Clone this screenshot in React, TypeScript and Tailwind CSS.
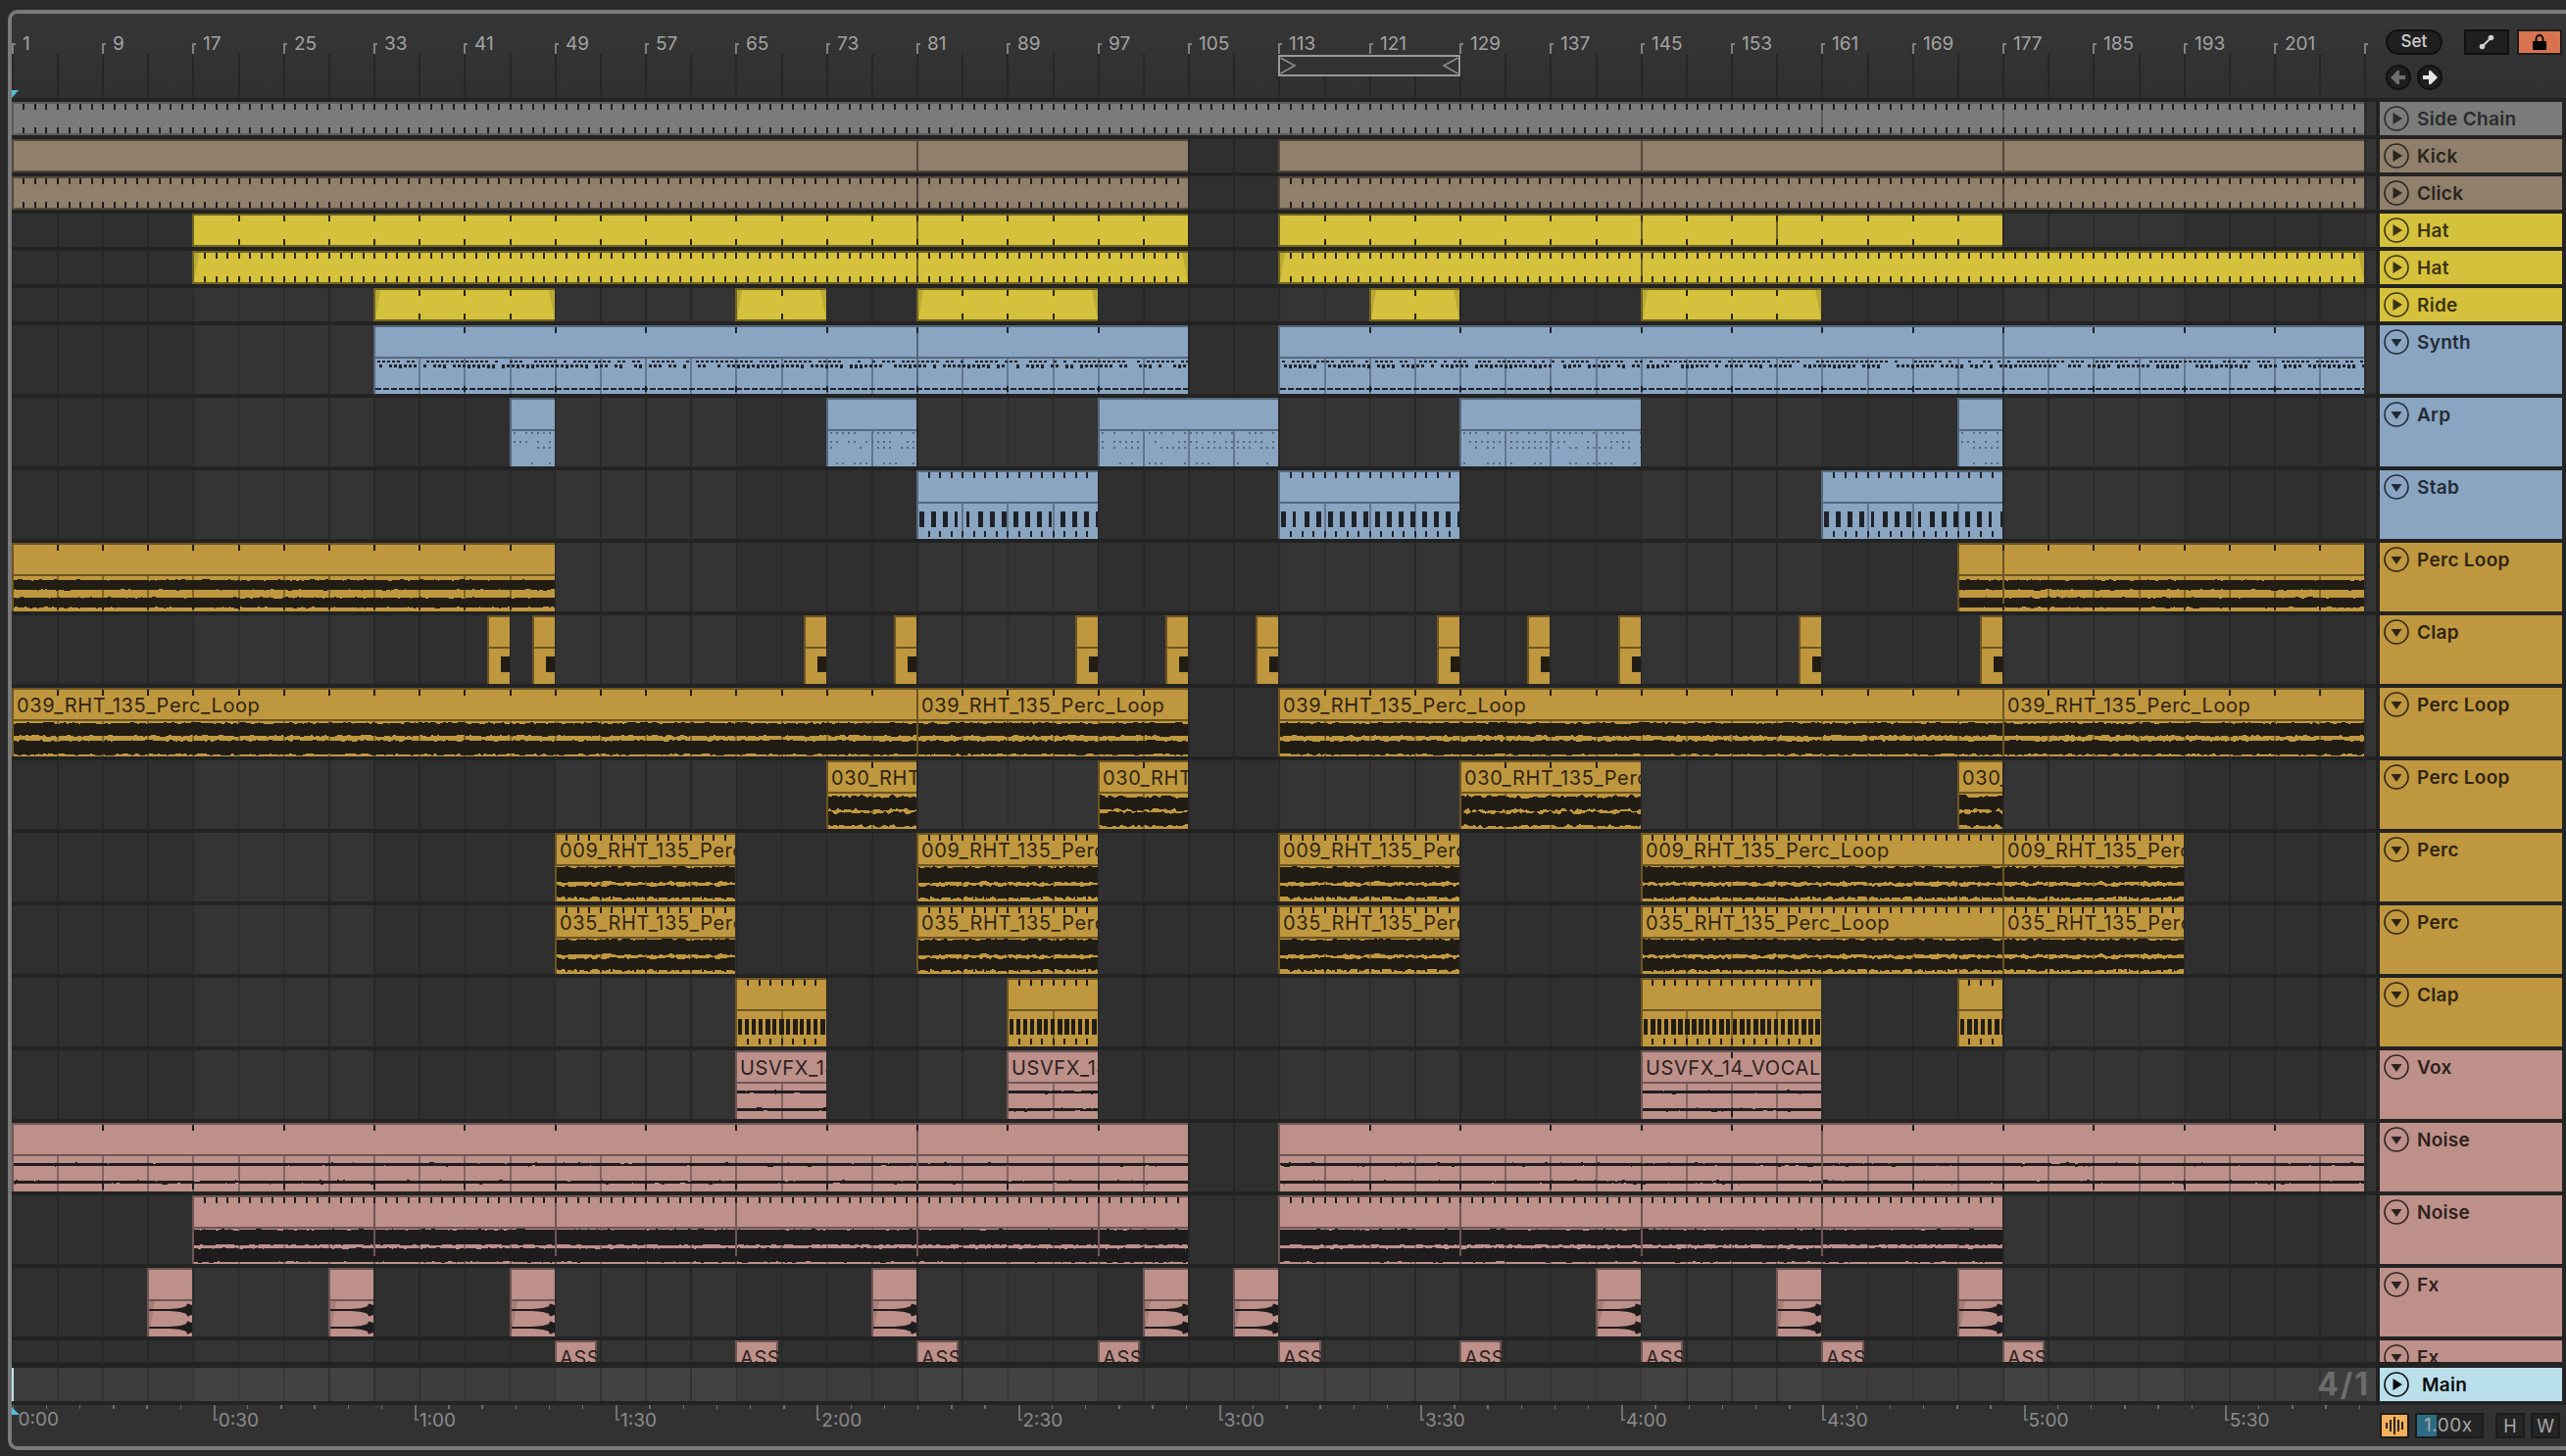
import type { ReactNode } from 'react';

const BAR = 11.5415;
const bx = (bar: number) => Math.round((bar - 1) * BAR - 0.2);

type Tone = 'gray' | 'tan' | 'yellow' | 'blue' | 'gold' | 'pink';

const TONES: Record<Tone, { clip: string; header: string; edge: string; ink: string; icon: string; label: string }> = {
    gray: { clip: 'bg-[#7b7b7b]', header: 'bg-[#7b7b7b] text-[#2b2b2b]', edge: '#5c5c5c', ink: '#211c1e', icon: '#2b2b2b', label: 'text-[#2b2b2b]' },
    tan: { clip: 'bg-[#8f7f6b]', header: 'bg-[#8f7f6b] text-[#2a241e]', edge: '#54483b', ink: '#211c18', icon: '#2a241e', label: 'text-[#2a241e]' },
    yellow: { clip: 'bg-[#d5c13c]', header: 'bg-[#d5c13c] text-[#3a3410]', edge: '#6f6420', ink: '#2a2610', icon: '#3a3410', label: 'text-[#3a3410]' },
    blue: { clip: 'bg-[#8aa5c2]', header: 'bg-[#8aa5c2] text-[#222b36]', edge: '#56687c', ink: '#1e2228', icon: '#222b36', label: 'text-[#222b36]' },
    gold: { clip: 'bg-[#bf973e]', header: 'bg-[#bf973e] text-[#2f2510]', edge: '#6d5522', ink: '#211d14', icon: '#2f2510', label: 'text-[#2f2510]' },
    pink: { clip: 'bg-[#bd908a]', header: 'bg-[#bd908a] text-[#2e2220]', edge: '#705654', ink: '#1f1c1e', icon: '#2e2220', label: 'text-[#2e2220]' },
};

type Wave = 'none' | 'dots' | 'arp' | 'stab' | 'thick' | 'loop' | 'perc' | 'spindle' | 'short' | 'blocks' | 'lines' | 'heavy' | 'swell';

type ClipDef = { from: number; to: number; label?: string; marks?: number[] };

type RowDef = {
    name: string;
    tone: Tone;
    height: 34 | 70 | 22;
    wave: Wave;
    tick?: number;
    tickBottom?: boolean;
    fade?: boolean;
    clips: ClipDef[];
};

const split = (from: number, to: number, marks: number[] = [], label?: string): ClipDef => ({ from, to, marks, label });

const ROWS: RowDef[] = [
    { name: 'Side Chain', tone: 'gray', height: 34, wave: 'none', tick: 1, tickBottom: true, clips: [split(1, 209, [161, 177])] },
    { name: 'Kick', tone: 'tan', height: 34, wave: 'none', clips: [split(1, 105, [81]), split(113, 209, [145, 177])] },
    { name: 'Click', tone: 'tan', height: 34, wave: 'none', tick: 1, tickBottom: true, clips: [split(1, 105, [81]), split(113, 209, [145, 177])] },
    { name: 'Hat', tone: 'yellow', height: 34, wave: 'none', tick: 4, tickBottom: true, clips: [split(17, 105, [81]), split(113, 177, [145, 157])] },
    { name: 'Hat', tone: 'yellow', height: 34, wave: 'none', tick: 1, tickBottom: true, fade: true, clips: [split(17, 105, [81]), split(113, 209, [145])] },
    { name: 'Ride', tone: 'yellow', height: 34, wave: 'none', tick: 4, tickBottom: true, fade: true, clips: [split(33, 49), split(65, 73), split(81, 97), split(121, 129), split(145, 161)] },
    { name: 'Synth', tone: 'blue', height: 70, wave: 'dots', tick: 8, tickBottom: true, clips: [split(33, 105, [81]), split(113, 209, [177])] },
    { name: 'Arp', tone: 'blue', height: 70, wave: 'arp', clips: [split(45, 49), split(73, 81), split(97, 113), split(129, 145), split(173, 177)] },
    { name: 'Stab', tone: 'blue', height: 70, wave: 'stab', tick: 1, tickBottom: true, clips: [split(81, 97), split(113, 129), split(161, 177)] },
    { name: 'Perc Loop', tone: 'gold', height: 70, wave: 'thick', tick: 4, tickBottom: true, clips: [split(1, 49), split(173, 209, [177])] },
    {
        name: 'Clap', tone: 'gold', height: 70, wave: 'short',
        clips: [[43, 45], [47, 49], [71, 73], [79, 81], [95, 97], [103, 105], [111, 113], [127, 129], [135, 137], [143, 145], [159, 161], [175, 177]].map(([a, b]) => split(a, b)),
    },
    {
        name: 'Perc Loop', tone: 'gold', height: 70, wave: 'loop', tick: 4,
        clips: [
            split(1, 81, [], '039_RHT_135_Perc_Loop'),
            split(81, 105, [], '039_RHT_135_Perc_Loop'),
            split(113, 177, [], '039_RHT_135_Perc_Loop'),
            split(177, 209, [], '039_RHT_135_Perc_Loop'),
        ],
    },
    {
        name: 'Perc Loop', tone: 'gold', height: 70, wave: 'spindle', tick: 4,
        clips: [split(73, 81, [], '030_RHT_135_Perc'), split(97, 105, [], '030_RHT_135_Perc'), split(129, 145, [], '030_RHT_135_Perc'), split(173, 177, [], '030_RHT_135_Perc')],
    },
    {
        name: 'Perc', tone: 'gold', height: 70, wave: 'perc', tick: 1, tickBottom: true,
        clips: [
            split(49, 65, [], '009_RHT_135_Perc_Loop'),
            split(81, 97, [], '009_RHT_135_Perc_Loop'),
            split(113, 129, [], '009_RHT_135_Perc_Loop'),
            split(145, 177, [], '009_RHT_135_Perc_Loop'),
            split(177, 193, [], '009_RHT_135_Perc_Loop'),
        ],
    },
    {
        name: 'Perc', tone: 'gold', height: 70, wave: 'perc', tick: 1, tickBottom: true,
        clips: [
            split(49, 65, [], '035_RHT_135_Perc_Loop'),
            split(81, 97, [], '035_RHT_135_Perc_Loop'),
            split(113, 129, [], '035_RHT_135_Perc_Loop'),
            split(145, 177, [], '035_RHT_135_Perc_Loop'),
            split(177, 193, [], '035_RHT_135_Perc_Loop'),
        ],
    },
    { name: 'Clap', tone: 'gold', height: 70, wave: 'blocks', tick: 1, tickBottom: true, clips: [split(65, 73), split(89, 97), split(145, 161), split(173, 177)] },
    {
        name: 'Vox', tone: 'pink', height: 70, wave: 'lines', tick: 8, tickBottom: true,
        clips: [split(65, 73, [], 'USVFX_14_VOCAL'), split(89, 97, [], 'USVFX_14_VOCAL'), split(145, 161, [], 'USVFX_14_VOCAL')],
    },
    { name: 'Noise', tone: 'pink', height: 70, wave: 'lines', tick: 8, tickBottom: true, clips: [split(1, 105, [81]), split(113, 209, [161])] },
    { name: 'Noise', tone: 'pink', height: 70, wave: 'heavy', tick: 1, tickBottom: true, clips: [split(17, 105, [33, 49, 65, 81, 97]), split(113, 177, [129, 145, 161])] },
    {
        name: 'Fx', tone: 'pink', height: 70, wave: 'swell',
        clips: [[13, 17], [29, 33], [45, 49], [77, 81], [101, 105], [109, 113], [141, 145], [157, 161], [173, 177]].map(([a, b]) => split(a, b)),
    },
    {
        name: 'Fx', tone: 'pink', height: 22, wave: 'none',
        clips: [49, 65, 81, 97, 113, 129, 145, 161, 177].map((a) => split(a, a + 3.75, [], 'ASS')),
    },
];

const seeded = (seed: number) => {
    let s = seed * 9301 + 49297;
    return () => {
        s = (s * 9301 + 49297) % 233280;
        return s / 233280;
    };
};

// jagged horizontal band, used for most of the audio waveforms
const band = (w: number, top: number, bottom: number, amp: number, rnd: () => number, step = 3) => {
    const upper: string[] = [];
    const lower: string[] = [];
    for (let x = 0; x <= w + step; x += step) {
        upper.push(`${x},${(top + (rnd() - 0.5) * amp).toFixed(1)}`);
        lower.unshift(`${x},${(bottom + (rnd() - 0.5) * amp).toFixed(1)}`);
    }
    return `M${upper.join(' L')} L${lower.join(' L')} Z`;
};

function WaveShape({ wave, w, from, ink, edge }: { wave: Wave; w: number; from: number; ink: string; edge: string }) {
    const rnd = seeded(from * 17 + w);
    const out: ReactNode[] = [];

    if (wave === 'dots') {
        for (let x = 4; x < w; x += 5) {
            if (rnd() > 0.25) out.push(<rect key={`a${x}`} x={x} y={36} width={3} height={2} fill={ink} />);
            if (rnd() > 0.2) out.push(<rect key={`b${x}`} x={x + 2} y={40} width={3} height={rnd() > 0.7 ? 4 : 3} fill={ink} />);
        }
        for (let x = 2; x < w; x += 8) out.push(<rect key={`c${x}`} x={x} y={64} width={6} height={2} fill={ink} />);
    }
    if (wave === 'arp') {
        for (let x = 4; x < w; x += 6) {
            if (rnd() > 0.4) out.push(<rect key={`a${x}`} x={x} y={35} width={2} height={2} fill={edge} />);
            if (rnd() > 0.35) out.push(<rect key={`b${x}`} x={x} y={44} width={2} height={2} fill={edge} />);
            if (rnd() > 0.35) out.push(<rect key={`c${x}`} x={x} y={50} width={2} height={2} fill={edge} />);
            if (rnd() > 0.5) out.push(<rect key={`d${x}`} x={x} y={66} width={2} height={2} fill={edge} />);
        }
    }
    if (wave === 'stab') {
        for (let x = 3; x < w; x += 12) out.push(<rect key={x} x={x} y={42} width={rnd() > 0.8 ? 3 : 4.5} height={16} fill={ink} />);
    }
    if (wave === 'blocks') {
        for (let x = 3; x < w; x += 7) out.push(<rect key={x} x={x} y={42} width={rnd() > 0.6 ? 4.5 : 3.5} height={16} fill={ink} />);
    }
    if (wave === 'short') out.push(<rect key="s" x={w - 9} y={42} width={9} height={16} fill={ink} />);

    const bands: [number, number, number][] = {
        thick: [[38, 48, 1.5], [56, 66, 1.5]],
        loop: [[36, 49, 2], [54, 68, 2]],
        perc: [[35, 50.5, 2.5], [54, 66, 2.5]],
        spindle: [[37, 50.5, 4], [53.5, 67, 4]],
        lines: [[41, 44, 1.2], [59, 62, 1.2]],
        heavy: [[35, 50.5, 1.5], [54, 68, 1.5]],
    }[wave as string] as [number, number, number][] ?? [];

    bands.forEach(([t, b, a], i) => out.push(<path key={`band${i}`} d={band(w, t, b, a, rnd)} fill={ink} />));

    if (wave === 'swell') {
        [43, 61].forEach((c) => {
            const up: string[] = [];
            const down: string[] = [];
            for (let x = 2; x <= w; x += 1) {
                const t = x / w;
                const r = x > w - 6 ? 7 - (x - (w - 6)) * 0.35 : 1 + Math.pow(t, 6) * 7;
                up.push(`${x},${(c - r).toFixed(1)}`);
                down.unshift(`${x},${(c + r).toFixed(1)}`);
            }
            out.push(<path key={c} d={`M${up.join(' L')} L${down.join(' L')} Z`} fill={ink} shapeRendering="auto" />);
        });
    }
    return <>{out}</>;
}

function Clip({ row, clip }: { row: RowDef; clip: ClipDef }) {
    const tone = TONES[row.tone];
    const left = bx(clip.from);
    const w = bx(clip.to) - left;
    const big = row.height === 70;
    const h = row.height;
    const fullH = big ? 70 : 34;
    const ticks: number[] = [];
    const segs: number[] = [];
    for (let b = Math.ceil(clip.from); b < clip.to; b += 1) {
        if (b === clip.from) continue;
        if (row.tick && (b - 1) % row.tick === 0) ticks.push(bx(b) - left);
        if ((b - 1) % 4 === 0) segs.push(bx(b) - left);
    }
    return (
        <div className={`absolute top-0 overflow-hidden ${tone.clip}`} style={{ left, width: w, height: h }}>
            <svg className="absolute left-0 top-0" width={w} height={fullH} shapeRendering="crispEdges">
                {row.fade && <polygon points={`2,2 7,2 2,${fullH - 2}`} fill={tone.edge} opacity={0.25} shapeRendering="auto" />}
                {row.fade && <polygon points={`${w},2 ${w - 6},2 ${w},${fullH - 2}`} fill={tone.edge} opacity={0.25} shapeRendering="auto" />}
                {row.wave === 'swell' && <polygon points="2,34 8,34 2,68" fill={tone.edge} opacity={0.3} shapeRendering="auto" />}
                {big && segs.map((x) => <rect key={x} x={x} y={34} width={2} height={36} fill={tone.edge} opacity={0.75} />)}
                {big && <WaveShape wave={row.wave} w={w} from={clip.from} ink={tone.ink} edge={tone.edge} />}
                {(clip.marks ?? []).map((b) => <rect key={b} x={bx(b) - left} y={0} width={2} height={fullH} fill={tone.edge} />)}
                <rect x={0} y={0} width={w} height={2} fill={tone.edge} />
                <rect x={0} y={0} width={2} height={fullH} fill={tone.edge} />
                {big && <rect x={0} y={32} width={w} height={2} fill={tone.edge} />}
                {!big && row.height === 34 && <rect x={0} y={32} width={w} height={2} fill={tone.edge} />}
                {row.height === 22 && <rect x={w - 2} y={0} width={2} height={22} fill={tone.edge} />}
                {ticks.map((x) => <rect key={`t${x}`} x={x} y={2} width={2} height={6} fill={tone.ink} />)}
                {row.tickBottom && ticks.map((x) => <rect key={`u${x}`} x={x} y={fullH - 8} width={2} height={6} fill={tone.ink} />)}
            </svg>
            {clip.label && (
                <span className={`absolute left-[5px] top-[1px] whitespace-nowrap text-[20px] leading-[34px] tracking-[0.62px] ${tone.label}`}>{clip.label}</span>
            )}
        </div>
    );
}

function PlayIcon({ color, down }: { color: string; down?: boolean }) {
    return (
        <svg className="shrink-0" width="26" height="26" viewBox="0 0 26 26">
            <circle cx="13" cy="13" r="12" fill="none" stroke={color} strokeWidth="1.6" />
            {down ? <polygon points="7.5,10 18.5,10 13,18" fill={color} /> : <polygon points="9.5,7 9.5,19 19,13" fill={color} />}
        </svg>
    );
}

const laneBg =
    'bg-[image:repeating-linear-gradient(to_right,#272727_0,#272727_1.5px,transparent_1.5px,transparent_46.166px),repeating-linear-gradient(to_right,#2f2f2f_0,#2f2f2f_184.66px,#343434_184.66px,#343434_369.32px)]';

const mainBg =
    'bg-[image:repeating-linear-gradient(to_right,#323232_0,#323232_1.5px,transparent_1.5px,transparent_46.166px),repeating-linear-gradient(to_right,#3c3c3c_0,#3c3c3c_184.66px,#424242_184.66px,#424242_369.32px)]';

function Track({ row }: { row: RowDef }) {
    const tone = TONES[row.tone];
    const hClass = row.height === 34 ? 'h-[34px]' : row.height === 70 ? 'h-[70px]' : 'h-[22px]';
    return (
        <div className={`flex shrink-0 gap-1 ${hClass}`}>
            <div className={`relative w-[2412px] overflow-hidden ${laneBg}`}>
                {row.clips.map((clip) => <Clip key={clip.from} row={row} clip={clip} />)}
            </div>
            <div className={`flex w-[186px] items-start gap-[8px] overflow-hidden pl-[4px] pt-[4px] ${tone.header}`}>
                <PlayIcon color={tone.icon} down={row.height !== 34} />
                <span className="text-[19px] font-semibold leading-[28px] tracking-[0.3px]">{row.name}</span>
            </div>
        </div>
    );
}

function BarRuler() {
    const labels = Array.from({ length: 26 }, (_, i) => 1 + i * 8);
    const lines = Array.from({ length: 53 }, (_, i) => 1 + i * 4);
    return (
        <div className="relative h-full w-[2412px]">
            {lines.map((b) => (
                <div key={b} className="absolute bottom-0 top-[41px] w-[1.5px] bg-[#262626]" style={{ left: bx(b) }} />
            ))}
            {[...labels, 209].map((b) => (
                <div key={b} className="absolute top-[30px] h-[11px] w-[4px] border-l-2 border-t-2 border-[#808080]" style={{ left: bx(b) }} />
            ))}
            {labels.map((b) => (
                <span key={b} className="absolute top-[21px] text-[19px] leading-[20px] text-[#a3a3a3]" style={{ left: bx(b) + 11 }}>
                    {b}
                </span>
            ))}
            <div className="absolute left-[1292px] top-[42px] h-[22px] w-[186px] border-2 border-[#9a9a9a] bg-[#333333]">
                <svg className="absolute left-0 top-0" width="182" height="18">
                    <path d="M0.5,1 L15,9 L0.5,17" fill="none" stroke="#8d8d8d" strokeWidth="1.6" />
                    <path d="M181.5,1 L167,9 L181.5,17" fill="none" stroke="#8d8d8d" strokeWidth="1.6" />
                </svg>
            </div>
            <svg className="absolute left-0 top-[78px]" width="8" height="8">
                <polygon points="0,0 7,0 0,8" fill="#56bdd8" />
            </svg>
        </div>
    );
}

function TimeRuler() {
    const minor = Array.from({ length: 71 }, (_, i) => i);
    const times = ['0:00', '0:30', '1:00', '1:30', '2:00', '2:30', '3:00', '3:30', '4:00', '4:30', '5:00', '5:30'];
    return (
        <div className="relative h-full w-[2412px]">
            {minor.map((i) => (
                <div key={i} className="absolute top-0 h-[4px] w-[1.5px] bg-[#707070]" style={{ left: i * 34.2 + 0.5 }} />
            ))}
            {times.map((t, i) => (
                <div key={t} className="absolute top-0 flex" style={{ left: i * 205.2 + 0.5 }}>
                    {i > 0 && <div className="h-[16px] w-[4px] border-b-2 border-l-2 border-[#707070]" />}
                    <span className={`text-[19px] leading-[20px] text-[#8b8b8b] ${i > 0 ? 'ml-[1px] mt-[6px]' : 'ml-[6px] mt-[5px]'}`}>{t}</span>
                </div>
            ))}
            <svg className="absolute left-0 top-[2px]" width="10" height="10">
                <polygon points="0,0 8,8 0,8" fill="#56bdd8" />
            </svg>
        </div>
    );
}

function Arrow({ color, flip }: { color: string; flip?: boolean }) {
    return (
        <svg width="16" height="14" viewBox="0 0 16 14" className={flip ? 'rotate-180' : ''}>
            <polygon points="0,7 7,0 9,0 9,5 15,5 15,9 9,9 9,14 7,14" fill={color} />
        </svg>
    );
}

export default function App() {
    return (
        <div className="h-[1486px] w-[2618px] overflow-hidden bg-[#2a2a2a] pl-[8px] pt-[10px] font-['Inter',sans-serif]">
            <div className="flex h-[1470px] w-[2610px] flex-col overflow-hidden rounded-l-[10px] border-y-4 border-l-4 border-[#7a7a7a] bg-[#232323]">
                {/* Bar ruler and set controls */}
                <div className="flex h-[86px] shrink-0 bg-gradient-to-b from-[#363636] to-[#303030]">
                    <BarRuler />
                    <div className="flex w-[194px] flex-col pl-[10px] pt-[16px]">
                        <div className="flex">
                            <div className="flex h-[26px] w-[58px] items-center justify-center rounded-full border-2 border-[#111111] bg-[#1f1f1f] text-[17px] font-medium text-[#cfcfcf]">
                                Set
                            </div>
                            <div className="ml-[22px] flex h-[26px] w-[46px] items-center justify-center border-2 border-[#111111] bg-[#1f1f1f]">
                                <svg width="16" height="16" viewBox="0 0 16 16">
                                    <line x1="4" y1="12" x2="12" y2="4" stroke="#cfcfcf" strokeWidth="2" />
                                    <circle cx="3.5" cy="12.5" r="2.8" fill="#cfcfcf" />
                                    <circle cx="12.5" cy="3.5" r="2.8" fill="#cfcfcf" />
                                </svg>
                            </div>
                            <div className="ml-[8px] flex h-[26px] w-[46px] items-center justify-center border-2 border-[#1d1d1d] bg-[#d8734f]">
                                <svg width="14" height="16" viewBox="0 0 14 16">
                                    <path d="M3.5,8 V4.5 a3.5,3.5 0 0 1 7,0 V8" fill="none" stroke="#000000" strokeWidth="1.8" />
                                    <rect x="0" y="7" width="14" height="9" fill="#000000" />
                                </svg>
                            </div>
                        </div>
                        <div className="mt-[10px] flex gap-[6px]">
                            <div className="flex h-[26px] w-[26px] items-center justify-center rounded-full border-2 border-[#111111] bg-[#1f1f1f]">
                                <Arrow color="#6e6e6e" />
                            </div>
                            <div className="flex h-[26px] w-[26px] items-center justify-center rounded-full border-2 border-[#111111] bg-[#1f1f1f]">
                                <Arrow color="#e6e6e6" flip />
                            </div>
                        </div>
                    </div>
                </div>

                {/* Tracks */}
                <div className="flex flex-col gap-1 pt-1">
                    {ROWS.map((row, i) => <Track key={i} row={row} />)}
                </div>

                {/* Main track */}
                <div className="mt-[6px] flex h-[34px] shrink-0 gap-1">
                    <div className={`relative w-[2412px] ${mainBg}`}>
                        <div className="absolute bottom-0 left-0 top-0 w-[2px] bg-[#bfe6f0]" />
                        <span className="absolute right-[6px] top-0 text-[32px] font-bold leading-[34px] tracking-[2px] text-[#6c6c6c]">4/1</span>
                    </div>
                    <div className="flex w-[186px] items-start gap-[13px] bg-[#b9dfeb] pl-[4px] pt-[4px] text-[#0a0a0a]">
                        <PlayIcon color="#0a0a0a" />
                        <span className="text-[19px] font-semibold leading-[28px] tracking-[0.3px]">Main</span>
                    </div>
                </div>

                {/* Time ruler */}
                <div className="mt-1 flex h-[42px] shrink-0 bg-[#323232]">
                    <TimeRuler />
                    <div className="flex w-[194px] items-start pl-[4px] pt-[8px]">
                        <div className="flex h-[26px] w-[30px] items-center justify-center border-2 border-[#1d1d1d] bg-[#f5b05a]">
                            <svg width="20" height="18" viewBox="0 0 20 18">
                                <rect x="1" y="6" width="2" height="6" fill="#2a2218" />
                                <rect x="5" y="3" width="2" height="12" fill="#2a2218" />
                                <rect x="9" y="0" width="2" height="18" fill="#2a2218" />
                                <rect x="13" y="3" width="2" height="12" fill="#2a2218" />
                                <rect x="17" y="5" width="2" height="8" fill="#2a2218" />
                            </svg>
                        </div>
                        <div className="relative ml-[6px] h-[26px] w-[70px] border-2 border-[#1b1b1b] bg-[#242424]">
                            <div className="absolute bottom-0 left-0 top-0 w-[20px] bg-[#2e6c86]" />
                            <span className="absolute left-[7px] top-0 text-[19px] leading-[22px] tracking-[0.5px] text-[#a8a8a8]">1.00x</span>
                        </div>
                        <div className="ml-[12px] flex h-[26px] w-[30px] items-center justify-center border-2 border-[#1b1b1b] bg-[#242424] text-[18px] text-[#a8a8a8]">H</div>
                        <div className="ml-[6px] flex h-[26px] w-[30px] items-center justify-center border-2 border-[#1b1b1b] bg-[#242424] text-[18px] text-[#a8a8a8]">W</div>
                    </div>
                </div>
            </div>
        </div>
    );
}
